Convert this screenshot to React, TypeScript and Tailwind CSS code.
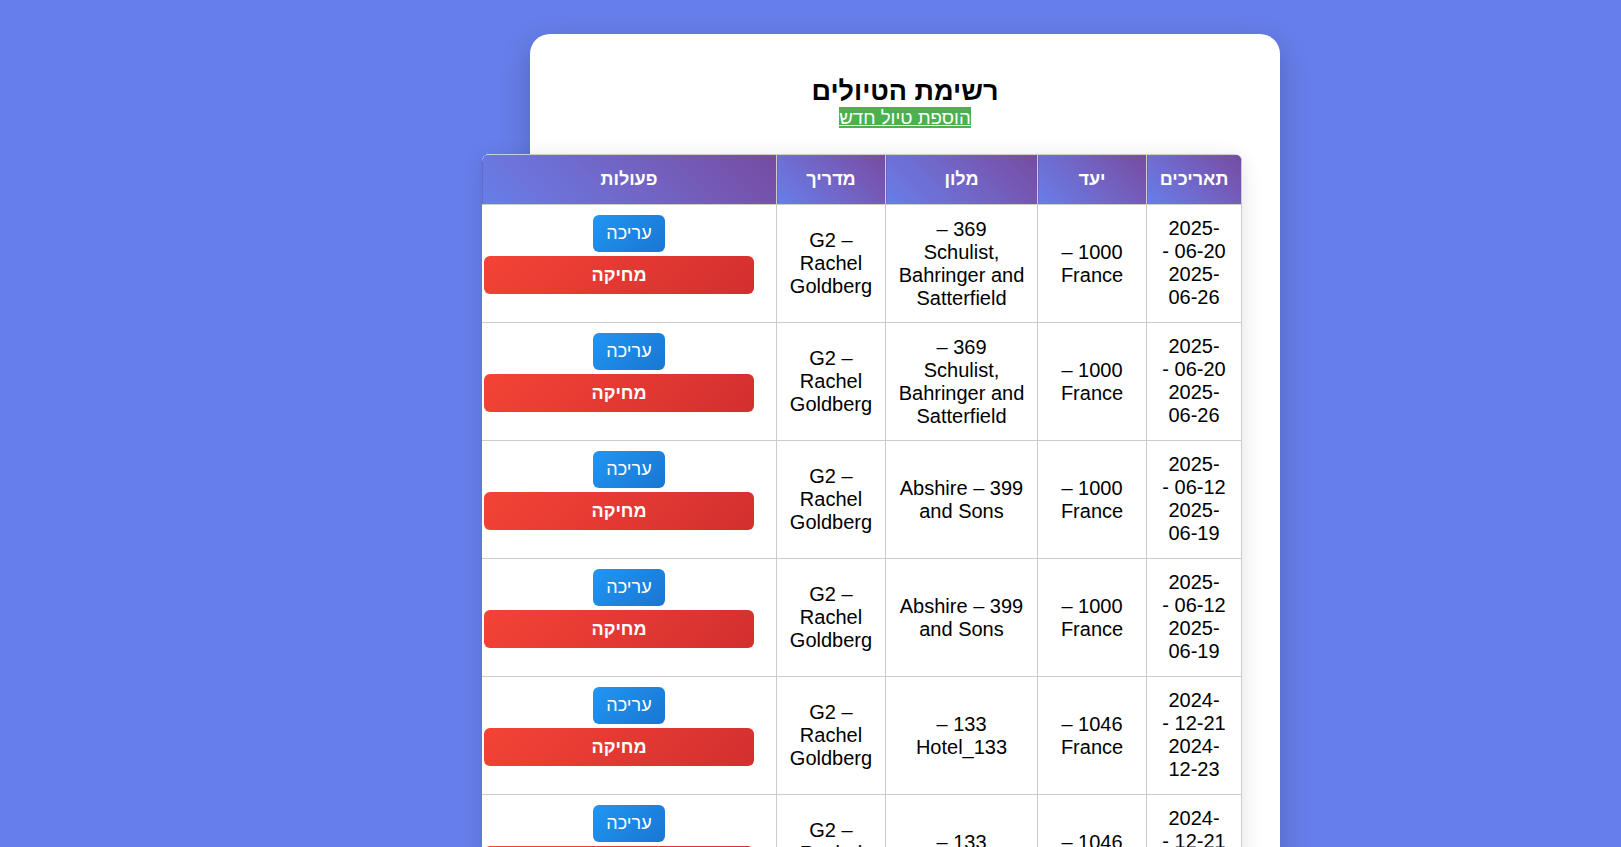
import React from "react";

type Trip = {
  dates: string;
  destination: string;
  hotel: string;
  guide: string;
};

const trips: Trip[] = [
  { dates: "2025-06-20 - 2025-06-26", destination: "1000 – France", hotel: "369 – Schulist, Bahringer and Satterfield", guide: "G2 – Rachel Goldberg" },
  { dates: "2025-06-20 - 2025-06-26", destination: "1000 – France", hotel: "369 – Schulist, Bahringer and Satterfield", guide: "G2 – Rachel Goldberg" },
  { dates: "2025-06-12 - 2025-06-19", destination: "1000 – France", hotel: "399 – Abshire and Sons", guide: "G2 – Rachel Goldberg" },
  { dates: "2025-06-12 - 2025-06-19", destination: "1000 – France", hotel: "399 – Abshire and Sons", guide: "G2 – Rachel Goldberg" },
  { dates: "2024-12-21 - 2024-12-23", destination: "1046 – France", hotel: "133 – Hotel_133", guide: "G2 – Rachel Goldberg" },
  { dates: "2024-12-21 - 2024-12-23", destination: "1046 – France", hotel: "133 – Hotel_133", guide: "G2 – Rachel Goldberg" },
  { dates: "2024-11-02 - 2024-11-09", destination: "1046 – France", hotel: "133 – Hotel_133", guide: "G2 – Rachel Goldberg" },
];

const headers = ["תאריכים", "יעד", "מלון", "מדריך", "פעולות"];

export default function App() {
  return (
    <div className="min-h-screen bg-[#667eea] pt-[34px] pb-10 font-['Liberation_Sans',Arial,sans-serif]">
      <div className="flex justify-end pr-[341px]">
        {/* כרטיס ראשי */}
        <div
          dir="rtl"
          className="w-[750px] rounded-[20px] bg-white px-[38px] pt-[41px] pb-10 shadow-[0_10px_30px_rgba(0,0,0,0.2)]"
        >
          <h2 className="text-center text-[27px] leading-[32px] font-bold text-black">
            רשימת הטיולים
          </h2>
          <div className="text-center text-[18.7px] leading-[21px]">
            <a href="#" className="bg-[#4caf50] text-white underline">
              הוספת טיול חדש
            </a>
          </div>

          {/* טבלה */}
          <div className="mt-[26px] w-[760px] overflow-hidden rounded-[8px] bg-white shadow-[0_4px_20px_rgba(0,0,0,0.12)]">
            <table className="w-full table-fixed border-collapse bg-white text-center text-[20px] leading-[23px] text-black">
              <colgroup>
                <col className="w-[95px]" />
                <col className="w-[109px]" />
                <col className="w-[152px]" />
                <col className="w-[109px]" />
                <col className="w-[295px]" />
              </colgroup>
              <thead>
                <tr>
                  {headers.map((h) => (
                    <th
                      key={h}
                      className="border border-[#ccc] bg-linear-45 from-[#667eea] to-[#764ba2] px-3 py-[14px] text-[18px] leading-[21px] font-bold text-white"
                    >
                      {h}
                    </th>
                  ))}
                </tr>
              </thead>
              <tbody>
                {trips.map((t, i) => (
                  <tr key={i}>
                    <td className="border border-[#ccc] px-3 pt-3 pb-[13px] align-middle">{t.dates}</td>
                    <td className="border border-[#ccc] px-3 py-3 align-middle">{t.destination}</td>
                    <td className="border border-[#ccc] px-3 py-3 align-middle">{t.hotel}</td>
                    <td className="border border-[#ccc] px-3 py-3 align-middle">{t.guide}</td>
                    <td className="border border-[#ccc] px-3 pt-[10px] align-top">
                      <div className="flex flex-col items-center gap-1">
                        <button className="h-[37px] w-[72px] rounded-[6px] bg-linear-135 from-[#2196f3] to-[#1976d2] text-[18px] text-white">
                          עריכה
                        </button>
                        <button className="ms-[10px] h-[38px] w-[270px] shrink-0 self-start rounded-[6px] bg-linear-135 from-[#f44336] to-[#d32f2f] text-[18px] font-bold text-white">
                          מחיקה
                        </button>
                      </div>
                    </td>
                  </tr>
                ))}
              </tbody>
            </table>
          </div>
        </div>
      </div>
    </div>
  );
}
